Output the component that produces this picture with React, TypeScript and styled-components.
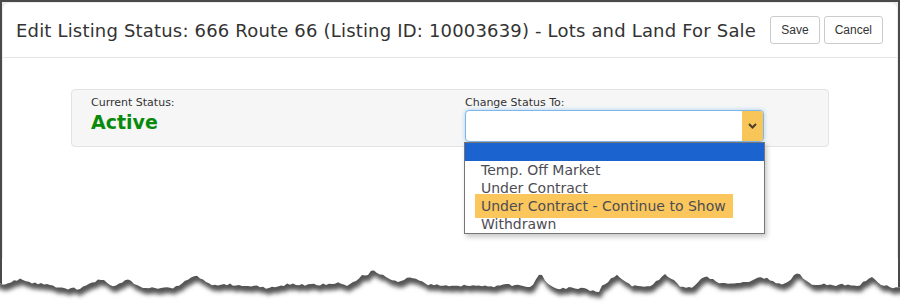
import styled, { createGlobalStyle } from 'styled-components'

const GlobalStyle = createGlobalStyle`
  html, body {
    margin: 0;
    padding: 0;
    background: #ffffff;
  }
  body {
    width: 900px;
    height: 303px;
    overflow: hidden;
  }
`

const Frame = styled.div`
  width: 900px;
  box-sizing: border-box;
  border: 2px solid #4a4a4a;
  border-bottom: none;
  background: #ececec;
  padding-top: 1px;
  display: flex;
  flex-direction: column;
`

const Modal = styled.section`
  margin: 0 1px;
  background: #ffffff;
  border-radius: 6px 6px 0 0;
  display: flex;
  flex-direction: column;
`

const Header = styled.header`
  height: 55px;
  box-sizing: border-box;
  display: flex;
  align-items: center;
  justify-content: space-between;
  padding: 0 14px 0 13px;
  border-bottom: 1px solid #e5e5e5;
`

const Title = styled.h4`
  margin: 0;
  font-family: 'DejaVu Sans', Verdana, sans-serif;
  font-size: 18px;
  font-weight: normal;
  letter-spacing: 0.18px;
  color: #333333;
  white-space: nowrap;
`

const Actions = styled.div`
  display: flex;
  gap: 4px;
`

const Button = styled.button`
  height: 28px;
  padding: 0 10px;
  background: #ffffff;
  border: 1px solid #cccccc;
  border-radius: 3px;
  font-family: 'Liberation Sans', Arial, sans-serif;
  font-size: 12px;
  color: #333333;
`

const Body = styled.div`
  height: 200px;
  box-sizing: border-box;
  padding: 31px 68px 0;
`

const Panel = styled.div`
  height: 58px;
  box-sizing: border-box;
  padding: 5px 0 0 19px;
  background: #f6f6f6;
  border: 1px solid #e3e3e3;
  border-radius: 4px;
  display: grid;
  grid-template-columns: 374px 299px;
`

const Field = styled.div`
  display: flex;
  flex-direction: column;
  position: relative;
`

const Label = styled.span`
  font-family: 'DejaVu Sans', Verdana, sans-serif;
  font-size: 11px;
  line-height: 15px;
  color: #333333;
`

const StatusValue = styled.strong`
  font-family: 'DejaVu Sans', Verdana, sans-serif;
  font-size: 19px;
  line-height: 24px;
  font-weight: bold;
  color: #0a8a0a;
`

const Select = styled.div`
  height: 32px;
  box-sizing: border-box;
  display: flex;
  justify-content: flex-end;
  background: #ffffff;
  border: 1px solid #7fb6ea;
  border-radius: 4px;
  box-shadow: 0 0 4px rgba(102, 175, 233, 0.55);
  overflow: hidden;
`

const Caret = styled.span`
  width: 21px;
  display: flex;
  align-items: center;
  justify-content: center;
  background: #f7c558;
`

const OptionList = styled.ul`
  position: absolute;
  top: 47px;
  left: -1px;
  width: 301px;
  box-sizing: border-box;
  margin: 0;
  padding: 0;
  list-style: none;
  background: #ffffff;
  border: 1px solid #767676;
  box-shadow: 2px 3px 5px rgba(0, 0, 0, 0.22);
  z-index: 2;
`

const Option = styled.li<{ $selected?: boolean }>`
  height: 18px;
  display: flex;
  align-items: center;
  padding-left: 16px;
  font-family: 'DejaVu Sans', Verdana, sans-serif;
  font-size: 14px;
  color: #4d4d55;
  white-space: nowrap;
  background: ${({ $selected }) => ($selected ? '#1b64cf' : 'transparent')};
`

const Marker = styled.span`
  line-height: 18px;
  padding: 3px 7px 3px 6px;
  margin-left: -6px;
  background: #fbc65b;
`

const TornEdge = styled.svg`
  display: block;
  width: 900px;
  height: 45px;
  margin: 0 -2px;
`

const OPTIONS = ['', 'Temp. Off Market', 'Under Contract', 'Under Contract - Continue to Show', 'Withdrawn']

// [centre x, height, half width]; negative height makes a dip
const PEAKS: [number, number, number][] = [
  [20, 5, 16], [98, 10, 16], [128, 7, 12], [195, 11, 16], [262, -3, 30], [373, 13, 26], [410, 7, 16],
  [540, 11, 10], [600, -6, 14], [617, 12, 16], [666, 11, 14], [706, 9, 14], [760, 5, 16],
  [798, 11, 12], [872, 10, 14],
]

function tornEdgePath(): string {
  let seed = 11
  const rand = () => {
    seed = (seed * 16807) % 2147483647
    return (seed - 1) / 2147483646
  }
  const points: string[] = []
  let drift = 0
  for (let x = -4; x <= 904; x += 3) {
    drift += (rand() - 0.5) * 2.4 - drift * 0.15
    let lift = 0
    for (const [cx, h, w] of PEAKS) {
      const d = Math.abs(x - cx)
      if (d < w) {
        const v = h * (1 - d / w)
        lift = h > 0 ? Math.max(lift, v) : Math.min(lift, v)
      }
    }
    const y = 27 + Math.sin(x / 70) * 1.5 + drift + (rand() - 0.5) * 1.8 - lift
    points.push(`${x},${y.toFixed(1)}`)
  }
  return `M-4,0 L${points.join(' L')} L904,0 Z`
}

const EDGE = tornEdgePath()

function App() {
  return (
    <>
      <GlobalStyle />
      <Frame>
        <Modal>
          <Header>
            <Title>Edit Listing Status: 666 Route 66 (Listing ID: 10003639) - Lots and Land For Sale</Title>
            <Actions>
              <Button>Save</Button>
              <Button>Cancel</Button>
            </Actions>
          </Header>
          <Body>
            <Panel>
              <Field>
                <Label>Current Status:</Label>
                <StatusValue>Active</StatusValue>
              </Field>
              <Field>
                <Label>Change Status To:</Label>
                <Select>
                  <Caret>
                    <svg width="9" height="6" viewBox="0 0 9 6">
                      <path d="M1 1 L4.5 4.5 L8 1" fill="none" stroke="#4a3f2c" strokeWidth="2" />
                    </svg>
                  </Caret>
                </Select>
                <OptionList>
                  {OPTIONS.map((label, i) => (
                    <Option key={i} $selected={i === 0}>
                      {i === 3 ? <Marker>{label}</Marker> : label}
                    </Option>
                  ))}
                </OptionList>
              </Field>
            </Panel>
          </Body>
        </Modal>
        <TornEdge viewBox="0 0 900 45">
          <defs>
            <filter id="edge-shadow" x="-5%" y="-50%" width="110%" height="200%">
              <feGaussianBlur stdDeviation="2.2" />
            </filter>
            <clipPath id="paper">
              <path d={EDGE} />
            </clipPath>
          </defs>
          <rect width="900" height="45" fill="#ffffff" />
          <path d={EDGE} fill="#555555" transform="translate(2 6)" filter="url(#edge-shadow)" />
          <path d={EDGE} fill="#ffffff" />
          <g clipPath="url(#paper)">
            <rect x="0" y="0" width="2" height="45" fill="#4a4a4a" />
            <rect x="898" y="0" width="2" height="45" fill="#4a4a4a" />
          </g>
        </TornEdge>
      </Frame>
    </>
  )
}

export default App
